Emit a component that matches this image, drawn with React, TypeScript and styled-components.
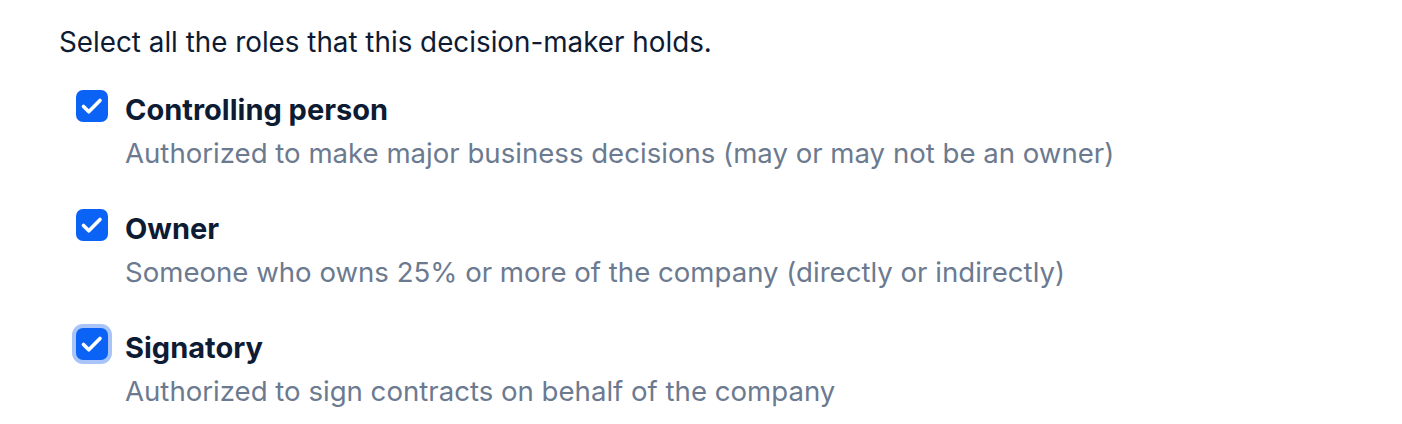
import React, { useState } from 'react';
import styled, { createGlobalStyle } from 'styled-components';

const GlobalStyle = createGlobalStyle`
  body {
    margin: 0;
    background: #ffffff;
    font-family: Inter, 'Noto Sans', sans-serif;
    -webkit-font-smoothing: antialiased;
  }
`;

interface IRole {
  id: string;
  title: string;
  description: string;
}

const roles: IRole[] = [
  {
    id: 'controlling',
    title: 'Controlling person',
    description: 'Authorized to make major business decisions (may or may not be an owner)',
  },
  {
    id: 'owner',
    title: 'Owner',
    description: 'Someone who owns 25% or more of the company (directly or indirectly)',
  },
  {
    id: 'signatory',
    title: 'Signatory',
    description: 'Authorized to sign contracts on behalf of the company',
  },
];

export default function App() {
  const [selected, setSelected] = useState<string[]>(roles.map((role) => role.id));

  const handleToggle = (id: string) => {
    setSelected((prev) => (prev.includes(id) ? prev.filter((item) => item !== id) : [...prev, id]));
  };

  return (
    <>
      <GlobalStyle />
      <Wrapper>
        <Prompt>Select all the roles that this decision-maker holds.</Prompt>
        <RoleList>
          {roles.map((role, index) => (
            <RoleRow key={role.id} onClick={() => handleToggle(role.id)}>
              <CheckBox $checked={selected.includes(role.id)} $focused={index === roles.length - 1}>
                {selected.includes(role.id) ? (
                  <svg width="32" height="32" viewBox="0 0 32 32" fill="none">
                    <path
                      d="M7.5 16.5L12.8 21.8L24 10.5"
                      stroke="#ffffff"
                      strokeWidth="3.6"
                      strokeLinecap="round"
                      strokeLinejoin="round"
                    />
                  </svg>
                ) : null}
              </CheckBox>
              <RoleText>
                <RoleTitle>{role.title}</RoleTitle>
                <RoleDescription>{role.description}</RoleDescription>
              </RoleText>
            </RoleRow>
          ))}
        </RoleList>
      </Wrapper>
    </>
  );
}

const Wrapper = styled.div`
  padding: 24px 59px;
`;

const Prompt = styled.div`
  font-size: 27.8px;
  line-height: 36px;
  color: #0d1b33;
`;

const RoleList = styled.div`
  display: flex;
  flex-direction: column;
  gap: 38px;
  margin-top: 30px;
  padding-left: 17px;
`;

const RoleRow = styled.div`
  display: flex;
  align-items: flex-start;
  gap: 17px;
  cursor: pointer;
`;

const CheckBox = styled.div<{ $checked: boolean; $focused: boolean }>`
  flex: none;
  width: 32px;
  height: 32px;
  border-radius: 7px;
  background: ${({ $checked }) => ($checked ? '#0b63f6' : '#ffffff')};
  box-shadow: ${({ $focused }) => ($focused ? '0 0 0 4px #a9c4f8' : 'none')};
`;

const RoleText = styled.div`
  display: flex;
  flex-direction: column;
  gap: 5px;
`;

const RoleTitle = styled.div`
  font-size: 29px;
  line-height: 40px;
  font-weight: 700;
  color: #0d1b33;
`;

const RoleDescription = styled.div`
  font-size: 27.6px;
  line-height: 36px;
  color: #6c7a90;
`;
